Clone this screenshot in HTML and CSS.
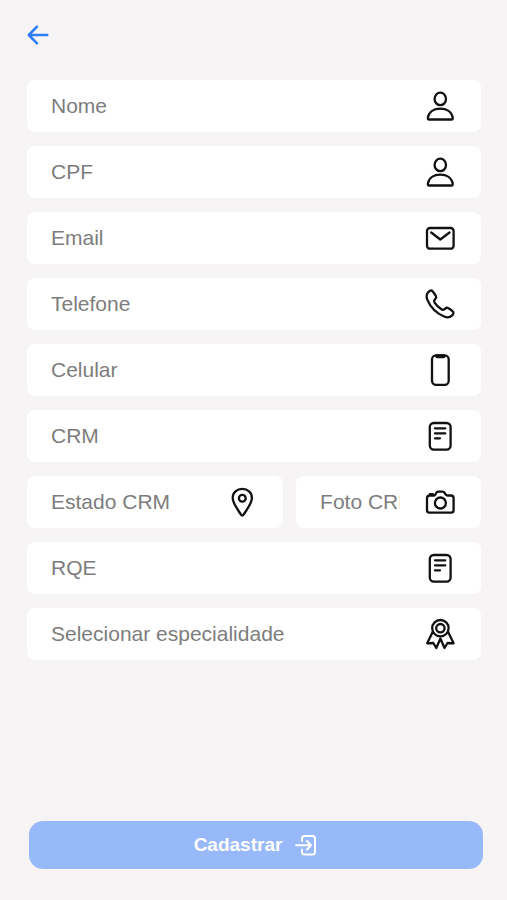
FILE: index.html
```html
<!DOCTYPE html>
<html lang="pt-BR">
<head>
    <meta charset="UTF-8">
    <meta name="viewport" content="width=device-width, initial-scale=1.0">
    <title>Cadastro</title>
    <link rel="stylesheet" href="styles.css">
</head>
<body>
    <header>
        <a class="back" href="#" aria-label="Voltar">
            <svg viewBox="0 0 24 24"><path d="M21.300 12H3M11 3.700L2.800 12L11 20.300"/></svg>
        </a>
    </header>

    <form class="form">
        <div class="fields">
            <label class="field">
                <input type="text" placeholder="Nome" aria-label="Nome">
                <svg viewBox="0 0 32 32"><ellipse cx="16.300" cy="8.900" rx="5.700" ry="6.300"/><path d="M3.900 27.500C4.900 21.700 10 18.700 16.300 18.700S27.700 21.700 28.700 27.500C28.900 28.900 28.500 29.500 27.500 29.500H5.100C4.100 29.500 3.700 28.900 3.900 27.500Z"/></svg>
            </label>

            <label class="field">
                <input type="text" placeholder="CPF" aria-label="CPF">
                <svg viewBox="0 0 32 32"><ellipse cx="16.300" cy="8.900" rx="5.700" ry="6.300"/><path d="M3.900 27.500C4.900 21.700 10 18.700 16.300 18.700S27.700 21.700 28.700 27.500C28.900 28.900 28.500 29.500 27.500 29.500H5.100C4.100 29.500 3.700 28.900 3.900 27.500Z"/></svg>
            </label>

            <label class="field">
                <input type="email" placeholder="Email" aria-label="Email">
                <svg viewBox="0 0 32 32"><rect x="3" y="6" width="26.600" height="20.700" rx="3"/><path d="M7.200 10.500L16.300 17.500L25.500 10.500"/></svg>
            </label>

            <label class="field">
                <input type="tel" placeholder="Telefone" aria-label="Telefone">
                <svg viewBox="0 0 32 32"><path d="M4.200 4.300C5.500 2.700 7.300 1.800 8.600 3.200C10 4.900 11.100 6.600 12 8.200C12.800 9.700 11.700 10.600 10.800 11.600C9.900 12.700 9.900 13.500 10.600 14.700C12.200 17.300 14.600 19.600 17.400 21.300C18.600 22 19.500 22 20.500 21.100C21.600 20.200 22.500 19.200 24 20C25.600 20.900 27.200 22 28.700 23.300C30.200 24.600 29.300 26.500 27.800 27.700C25.600 29.800 23 29.700 20.200 28.500C12.500 25.300 6.300 18.800 3.300 11.600C2.200 8.900 2.300 6.400 4.200 4.300Z"/></svg>
            </label>

            <label class="field">
                <input type="tel" placeholder="Celular" aria-label="Celular">
                <svg viewBox="0 0 32 32"><rect x="8" y="1.300" width="16.700" height="29.500" rx="4"/><path d="M12.300 1.500V2.300Q12.300 3 13.300 3H19.500Q20.500 3 20.500 2.300V1.500Z"/></svg>
            </label>

            <label class="field">
                <input type="text" placeholder="CRM" aria-label="CRM">
                <svg viewBox="0 0 32 32"><rect x="5.800" y="3" width="20.800" height="26.600" rx="4"/><path d="M11 8.300H21.300M11 13.300H21.300M11 18.300H16"/></svg>
            </label>

            <div class="row">
                <label class="field">
                    <input type="text" placeholder="Estado CRM" aria-label="Estado CRM">
                    <svg viewBox="0 0 32 32"><path d="M16.300 29.600C15.600 29.600 15.200 29 14.700 28.200C11.900 23.600 6.700 17.300 6.700 11.900C6.700 6.500 10.900 2.900 16.300 2.900S25.900 6.500 25.900 11.900C25.900 17.300 20.700 23.600 17.900 28.200C17.400 29 17 29.600 16.300 29.600Z"/><circle cx="16.300" cy="12.200" r="3.400"/></svg>
                </label>
                <label class="field">
                    <input type="text" placeholder="Foto CRM" aria-label="Foto CRM">
                    <svg viewBox="0 0 32 32"><path d="M11.200 8.800L12.300 6.800C12.700 6 13.300 5.700 14.200 5.700H18.600C19.500 5.700 20.100 6 20.600 6.800L21.700 8.500C22.200 9.200 22.700 9.500 23.600 9.500H27C28.700 9.500 29.600 10.400 29.600 12.200V23.900C29.600 25.700 28.700 26.600 27 26.600H5.600C3.900 26.600 3 25.700 3 23.900V12.200C3 10.400 3.900 9.500 5.600 9.500H9.500C10.300 9.500 10.800 9.400 11.200 8.800ZM5.900 9V8.200H8.900V9"/><circle cx="16.400" cy="17" r="5.500"/></svg>
                </label>
            </div>

            <label class="field">
                <input type="text" placeholder="RQE" aria-label="RQE">
                <svg viewBox="0 0 32 32"><rect x="5.800" y="3" width="20.800" height="26.600" rx="4"/><path d="M11 8.300H21.300M11 13.300H21.300M11 18.300H16"/></svg>
            </label>

            <label class="field">
                <select aria-label="Especialidade">
                    <option value="">Selecionar especialidade</option>
                </select>
                <svg viewBox="0 0 32 32"><circle cx="16.400" cy="10.200" r="8.200"/><circle cx="16.400" cy="10.200" r="4.200"/><path d="M8.400 14.500L3.200 25.300L9.300 25L12.300 30L16.400 20.500L20.500 30L23.500 25L29.600 25.300L24.400 14.500"/></svg>
            </label>
        </div>

        <div class="actions">
            <button class="btn" type="submit">
                Cadastrar
                <svg viewBox="0 0 24 24"><path d="M8 8V5.500Q8 3 10.500 3H18.500Q21 3 21 5.500V19Q21 21.500 18.500 21.500H10.500Q8 21.500 8 19V16.500M2 12.200H17M13 8L17 12.200L13 16.500"/></svg>
            </button>
        </div>
    </form>
</body>
</html>
```

FILE: styles.css
```css
:root {
    --primary-color: #2f7df6;
    --disabled-color: #97b9f9;
    --background: #f6f4f5;
    --placeholder-color: #7d7d7d;
    --field-height: 52px;
}

* {
    box-sizing: border-box;
}

body {
    font-family: "Liberation Sans", Arial, sans-serif;
    background-color: var(--background);
    margin: 0;
    min-height: 100vh;
    display: flex;
    flex-direction: column;
}

svg {
    fill: none;
    stroke: currentColor;
    stroke-width: 2;
    stroke-linecap: round;
    stroke-linejoin: round;
    flex-shrink: 0;
}

header {
    padding: 23px 26px 33px;
}

.back {
    display: inline-block;
    color: var(--primary-color);
    vertical-align: top;
}

.back svg {
    display: block;
    width: 24px;
    height: 24px;
    stroke-width: 2.500;
}

.form {
    flex: 1;
    display: flex;
    flex-direction: column;
    justify-content: space-between;
}

.fields {
    display: flex;
    flex-direction: column;
    gap: 14px;
    padding: 0 26px 24px 27px;
}

.row {
    display: grid;
    grid-template-columns: 18fr 13fr;
    gap: 13px;
}

.field {
    display: flex;
    align-items: center;
    gap: 24px;
    min-width: 0;
    height: var(--field-height);
    padding: 0 25px 0 24px;
    background-color: white;
    border-radius: 8px;
}

.field svg {
    width: 32px;
    height: 32px;
    color: #111;
    stroke-width: 2.300;
}

.field input,
.field select {
    flex: 1;
    min-width: 0;
    width: 100%;
    height: 100%;
    padding: 0;
    border: none;
    outline: none;
    background: none;
    appearance: none;
    font-family: inherit;
    font-size: 21px;
    color: #222;
}

.field select {
    padding-bottom: 2px;
    color: var(--placeholder-color);
}

.field input::placeholder {
    color: var(--placeholder-color);
    opacity: 1;
}

.actions {
    padding: 0 24px 31px 29px;
}

.btn {
    display: flex;
    align-items: center;
    justify-content: center;
    gap: 12px;
    width: 100%;
    height: 48px;
    border: none;
    border-radius: 14px;
    background-color: var(--disabled-color);
    color: white;
    font-family: inherit;
    font-size: 19px;
    font-weight: bold;
    cursor: pointer;
}

.btn svg {
    width: 24px;
    height: 24px;
}
```
